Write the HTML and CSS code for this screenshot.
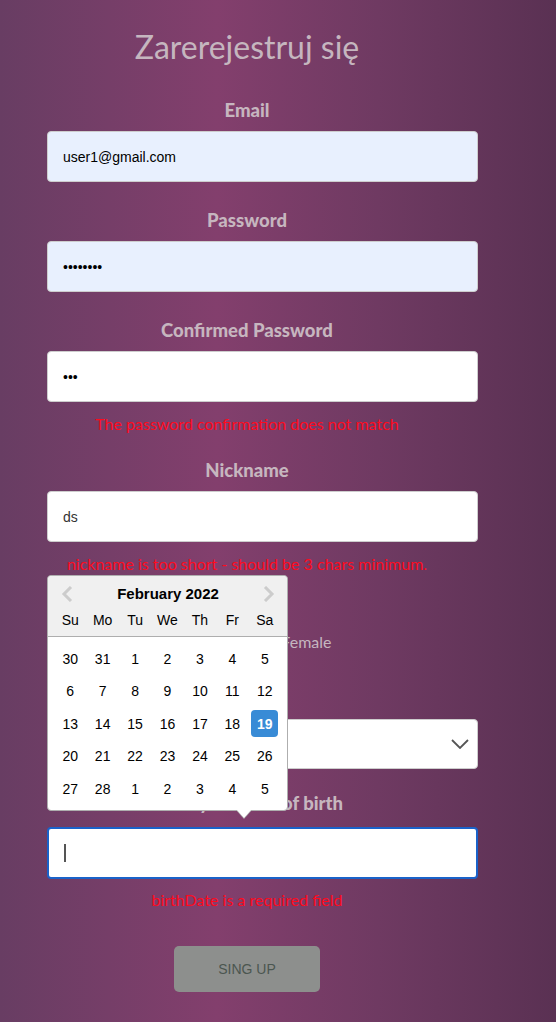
FILE: index.html
```html
<!DOCTYPE html>
<html lang="pl">
<head>
<meta charset="utf-8">
<title>Zarerejestruj się</title>
<link rel="stylesheet" href="styles.css">
</head>
<body>
<div class="page">
  <h1 class="title">Zarerejestruj się</h1>
  <form class="form">
    <div class="field">
      <label class="label">Email</label>
      <input class="input autofill" type="text" value="user1@gmail.com">
    </div>
    <div class="field">
      <label class="label">Password</label>
      <input class="input autofill" type="password" value="12345678">
    </div>
    <div class="field">
      <label class="label">Confirmed Password</label>
      <input class="input" type="password" value="123">
      <div class="error">The password confirmation does not match</div>
    </div>
    <div class="field">
      <label class="label">Nickname</label>
      <input class="input muted" type="text" value="ds">
      <div class="error">nickname is too short - should be 3 chars minimum.</div>
    </div>
    <div class="field field-radio">
      <label class="label">Gender</label>
      <div class="radios">
        <label class="radio"><span class="dot"></span>Male</label>
        <label class="radio"><span class="dot"></span>Female</label>
      </div>
    </div>
    <div class="field field-country">
      <label class="label">Country</label>
      <div class="input select">
        <svg class="chev" width="18" height="10" viewBox="0 0 18 10"><path d="M1 1 L9 9 L17 1" fill="none" stroke="#555" stroke-width="1.8"/></svg>
      </div>
    </div>
    <div class="field field-date">
      <label class="label">Enter your date of birth</label>
      <div class="date-wrap">
        <div class="input focused"><span class="caret"></span></div>
        <div class="popup">
          <div class="cal-head">
            <div class="cal-nav">
              <svg width="12" height="16" viewBox="0 0 12 16"><path d="M10 1 L3 8 L10 15" fill="none" stroke="#ccc" stroke-width="3"/></svg>
              <span class="cal-month">February 2022</span>
              <svg width="12" height="16" viewBox="0 0 12 16"><path d="M2 1 L9 8 L2 15" fill="none" stroke="#ccc" stroke-width="3"/></svg>
            </div>
            <div class="cal-grid cal-names">
              <span>Su</span><span>Mo</span><span>Tu</span><span>We</span><span>Th</span><span>Fr</span><span>Sa</span>
            </div>
          </div>
          <div class="cal-grid cal-days">
            <span>30</span><span>31</span><span>1</span><span>2</span><span>3</span><span>4</span><span>5</span>
            <span>6</span><span>7</span><span>8</span><span>9</span><span>10</span><span>11</span><span>12</span>
            <span>13</span><span>14</span><span>15</span><span>16</span><span>17</span><span>18</span><span><b class="sel">19</b></span>
            <span>20</span><span>21</span><span>22</span><span>23</span><span>24</span><span>25</span><span>26</span>
            <span>27</span><span>28</span><span>1</span><span>2</span><span>3</span><span>4</span><span>5</span>
          </div>
        </div>
      </div>
      <div class="error">birthDate is a required field</div>
    </div>
    <button class="submit" type="button">SING UP</button>
  </form>
</div>
</body>
</html>
```

FILE: styles.css
```css
html, body {
  margin: 0;
  padding: 0;
}
body {
  min-height: 1022px;
  background: linear-gradient(90deg, #683d63 0%, #833f6d 39%, #6f3a62 68%, #5a3153 100%);
  font-family: Lato, "Open Sans", sans-serif;
}
.page {
  width: 462px;
  margin-left: 16px;
  padding-top: 27px;
  display: flex;
  flex-direction: column;
  align-items: center;
}
.title {
  margin: 0;
  font-size: 32px;
  line-height: 40px;
  font-weight: 400;
  color: #c5b6bf;
}
.form {
  width: 100%;
  margin-top: 32px;
  display: flex;
  flex-direction: column;
  align-items: center;
}
.field {
  width: 100%;
  display: flex;
  flex-direction: column;
  align-items: center;
  margin-bottom: 27px;
}
.label {
  font-size: 18.5px;
  font-weight: 900;
  line-height: 22px;
  color: #c6b6bf;
  margin-bottom: 10px;
}
.input {
  align-self: flex-end;
  box-sizing: border-box;
  width: 431px;
  height: 51px;
  margin: 0;
  border: 1px solid #cdcdcd;
  border-radius: 4px;
  background: #fff;
  padding: 0 15px;
  font: 14px "Liberation Sans", Arial, sans-serif;
  color: #000;
  outline: none;
}
.input.autofill {
  background: #e8f0fe;
}
.input.muted {
  color: #333;
}
.error {
  color: #ff0a1e;
  font-size: 16px;
  line-height: 20px;
  margin-top: 12px;
  margin-bottom: -2px;
}
.field-radio {
  margin-bottom: 36px;
}
.radios {
  display: flex;
  gap: 30px;
  height: 20px;
  align-items: center;
  padding-left: 14px;
}
.radio {
  display: flex;
  align-items: center;
  gap: 6px;
  font-size: 16px;
  color: #c5b6bf;
}
.dot {
  width: 12px;
  height: 12px;
  border-radius: 50%;
  border: 1px solid #c5b6bf;
  background: #fff;
}
.field-country {
  margin-bottom: 23px;
}
.select {
  height: 50px;
  display: flex;
  align-items: center;
  justify-content: flex-end;
  padding-right: 8px;
}
.field-date {
  margin-bottom: 0;
}
.field-date .label {
  margin-bottom: 13px;
}
.date-wrap {
  position: relative;
  align-self: flex-end;
  width: 431px;
}
.input.focused {
  height: 52px;
  border: 2px solid #1a62c9;
  display: flex;
  align-items: center;
  padding-left: 15px;
}
.caret {
  width: 2px;
  height: 18px;
  background: #555;
}
.field-date .error {
  margin-top: 11px;
  margin-bottom: 0;
}
.popup {
  position: absolute;
  z-index: 5;
  left: 0;
  bottom: calc(100% + 16px);
  width: 241px;
  box-sizing: border-box;
  border: 1px solid #aeaeae;
  border-radius: 4px;
  background: #fff;
  font-family: "Liberation Sans", Arial, sans-serif;
  color: #000;
}
.popup::before,
.popup::after {
  content: "";
  position: absolute;
  left: 188px;
  width: 0;
  height: 0;
  border-left: 8px solid transparent;
  border-right: 8px solid transparent;
}
.popup::before {
  top: 100%;
  border-top: 9px solid #aeaeae;
}
.popup::after {
  top: calc(100% - 1px);
  border-top: 9px solid #fff;
}
.cal-head {
  background: #f0f0f0;
  border-bottom: 1px solid #aeaeae;
  border-radius: 4px 4px 0 0;
  padding: 8px 0 6px;
}
.cal-nav {
  display: flex;
  align-items: center;
  justify-content: space-between;
  height: 20px;
  padding: 0 12px 0 13px;
}
.cal-month {
  font-weight: 700;
  font-size: 15px;
  line-height: 20px;
}
.cal-grid {
  display: grid;
  grid-template-columns: repeat(7, 1fr);
  padding: 0 6px;
  font-size: 14px;
}
.cal-grid span {
  display: flex;
  align-items: center;
  justify-content: center;
}
.cal-names {
  margin-top: 6px;
  line-height: 20px;
}
.cal-days {
  padding: 6px 6px 5px;
  grid-auto-rows: 32.5px;
}
.sel {
  width: 27px;
  height: 27px;
  border-radius: 4px;
  background: #388bd6;
  color: #fff;
  display: flex;
  align-items: center;
  justify-content: center;
}
.submit {
  margin-top: 36px;
  width: 146px;
  height: 46px;
  border: none;
  border-radius: 5px;
  background: #8d8f8d;
  color: #4b5650;
  font: 14px "Liberation Sans", Arial, sans-serif;
  padding: 0;
}
```
